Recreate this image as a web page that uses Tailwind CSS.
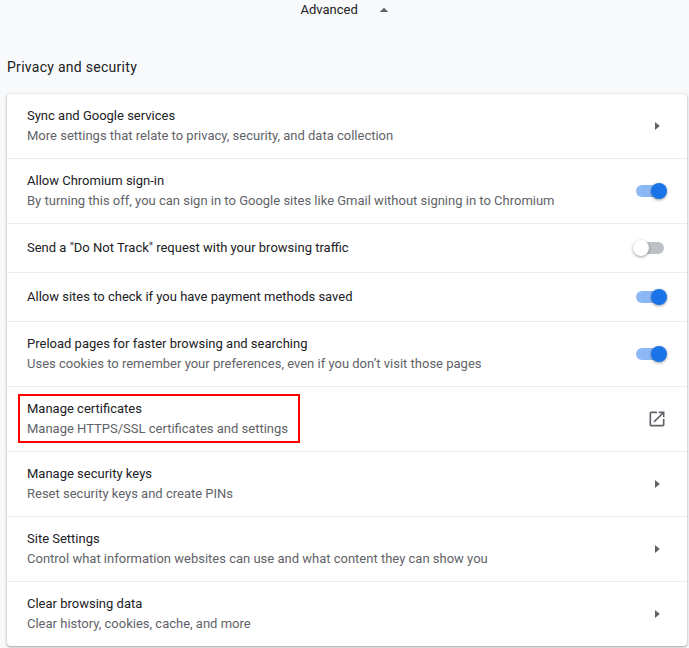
<!DOCTYPE html>
<html lang="en">
<head>
<meta charset="utf-8">
<title>Settings</title>
<script src="https://cdn.jsdelivr.net/npm/@tailwindcss/browser@4"></script>
</head>
<body class="h-[648px] overflow-hidden bg-[#f8f9fa] font-['Roboto',sans-serif] text-[13px] leading-5 text-[#202124]">
<svg class="hidden"><defs>
<symbol id="arrow" viewBox="0 0 6 10"><path d="M0 1L4.8 5L0 9Z" fill="#5f6368"/></symbol>
</defs></svg>
<header class="flex h-5 items-center pl-[300.5px]">
<span class="w-[57px] whitespace-nowrap">Advanced</span>
<svg class="ml-[21.5px] h-[6px] w-[10px]" viewBox="0 0 10 6"><path d="M0.7 5L5 0.7L9.3 5Z" fill="#5f6368"/></svg>
</header>
<h2 class="mt-[37px] pl-[7px] text-[14px] leading-5 tracking-[0.28px]">Privacy and security</h2>
<main class="mt-[17px] ml-[7px] h-[552px] w-[680px] divide-y divide-[#ededed] rounded bg-white shadow-[0_1px_2px_0_rgba(60,64,67,0.3),0_1px_3px_1px_rgba(60,64,67,0.15)]">
<section class="flex h-[65px] items-center justify-between pr-[26px] pl-5">
<div><p>Sync and Google services</p><p class="text-[#5f6368]">More settings that relate to privacy, security, and data collection</p></div>
<svg class="h-[10px] w-[6px]"><use href="#arrow"/></svg>
</section>
<section class="flex h-[65px] items-center justify-between pr-[20px] pl-5">
<div><p>Allow Chromium sign-in</p><p class="text-[#5f6368]">By turning this off, you can sign in to Google sites like Gmail without signing in to Chromium</p></div>
<div class="flex h-4 w-[31px] items-center"><div class="h-3 w-7 rounded-full bg-[#8db8f6]"></div><div class="-ml-[13px] size-4 shrink-0 rounded-full bg-[#1a73e8] shadow-[0_1px_3px_0_rgba(0,0,0,0.4)]"></div></div>
</section>
<section class="flex h-[49px] items-center justify-between pr-[23px] pl-5">
<p>Send a "Do Not Track" request with your browsing traffic</p>
<div class="flex h-4 w-[31px] items-center"><div class="z-10 size-4 shrink-0 rounded-full bg-white shadow-[0_1px_3px_0_rgba(0,0,0,0.4)]"></div><div class="-ml-[13px] h-3 w-7 shrink-0 rounded-full bg-[#bdc1c6]"></div></div>
</section>
<section class="flex h-[49px] items-center justify-between pr-[20px] pl-5">
<p>Allow sites to check if you have payment methods saved</p>
<div class="flex h-4 w-[31px] items-center"><div class="h-3 w-7 rounded-full bg-[#8db8f6]"></div><div class="-ml-[13px] size-4 shrink-0 rounded-full bg-[#1a73e8] shadow-[0_1px_3px_0_rgba(0,0,0,0.4)]"></div></div>
</section>
<section class="flex h-[65px] items-center justify-between pr-[20px] pl-5">
<div><p>Preload pages for faster browsing and searching</p><p class="text-[#5f6368]">Uses cookies to remember your preferences, even if you don’t visit those pages</p></div>
<div class="flex h-4 w-[31px] items-center"><div class="h-3 w-7 rounded-full bg-[#8db8f6]"></div><div class="-ml-[13px] size-4 shrink-0 rounded-full bg-[#1a73e8] shadow-[0_1px_3px_0_rgba(0,0,0,0.4)]"></div></div>
</section>
<section class="flex h-[65px] items-center justify-between pr-5 pl-[11px]">
<div class="mb-[2px] flex h-[49px] w-[282px] flex-col border-2 border-[#ff0000] pt-[3px] pl-[7px]"><p>Manage certificates</p><p class="text-[#5f6368]">Manage HTTPS/SSL certificates and settings</p></div>
<svg class="size-5" viewBox="0 0 24 24" fill="#5f6368"><path d="M19 19H5V5h7V3H5a2 2 0 0 0-2 2v14a2 2 0 0 0 2 2h14c1.1 0 2-.9 2-2v-7h-2v7zM14 3v2h3.59l-9.83 9.83 1.41 1.41L19 6.41V10h2V3h-7z"/></svg>
</section>
<section class="flex h-[65px] items-center justify-between pr-[26px] pl-5">
<div><p>Manage security keys</p><p class="text-[#5f6368]">Reset security keys and create PINs</p></div>
<svg class="h-[10px] w-[6px]"><use href="#arrow"/></svg>
</section>
<section class="flex h-[65px] items-center justify-between pr-[26px] pl-5">
<div><p>Site Settings</p><p class="text-[#5f6368]">Control what information websites can use and what content they can show you</p></div>
<svg class="h-[10px] w-[6px]"><use href="#arrow"/></svg>
</section>
<section class="flex h-[64px] items-center justify-between pr-[26px] pl-5">
<div><p>Clear browsing data</p><p class="text-[#5f6368]">Clear history, cookies, cache, and more</p></div>
<svg class="h-[10px] w-[6px]"><use href="#arrow"/></svg>
</section>
</main>
</body>
</html>
